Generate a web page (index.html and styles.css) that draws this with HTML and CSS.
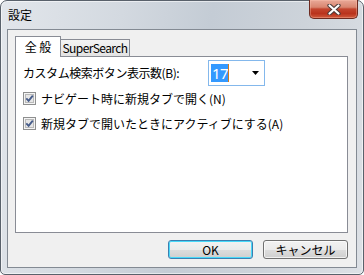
FILE: index.html
```html
<!DOCTYPE html>
<html lang="ja">
<head>
<meta charset="utf-8">
<title>設定</title>
<link rel="stylesheet" href="styles.css">
</head>
<body>
<div class="window">
  <div class="titlebar">
    <span class="title">設定</span>
    <div class="close">
      <svg width="14" height="11" viewBox="0 0 14 11">
        <path d="M2.5 1.5 L11.5 9.5 M11.5 1.5 L2.5 9.5" stroke="#4a3a38" stroke-width="4.2" stroke-linecap="round"/>
        <path d="M2.5 1.5 L11.5 9.5 M11.5 1.5 L2.5 9.5" stroke="#ffffff" stroke-width="2.2" stroke-linecap="round"/>
      </svg>
    </div>
  </div>
  <div class="client">
    <div class="tabs">
      <div class="tab active">全 般</div>
      <div class="tab">SuperSearch</div>
    </div>
    <div class="panel">
      <div class="row">
        <span class="label">カスタム検索ボタン表示数(B):</span>
        <div class="combo">
          <span class="sel">17</span><span class="caret"></span>
          <svg class="arrow" width="7" height="4" viewBox="0 0 7 4"><path d="M0 0 H7 L3.5 4 Z" fill="#000"/></svg>
        </div>
      </div>
      <div class="check">
        <svg class="box" width="13" height="13" viewBox="0 0 13 13">
          <rect x="0.5" y="0.5" width="12" height="12" fill="#f4f4f4" stroke="#8e8f8f"/>
          <rect x="2.5" y="2.5" width="8" height="8" fill="#e6e6e6" stroke="#b9b9b9"/>
          <path d="M3.3 6.4 L5.6 8.8 L9.8 3.6" fill="none" stroke="#465c8a" stroke-width="1.9"/>
        </svg>
        <span>ナビゲート時に新規タブで開く(N)</span>
      </div>
      <div class="check">
        <svg class="box" width="13" height="13" viewBox="0 0 13 13">
          <rect x="0.5" y="0.5" width="12" height="12" fill="#f4f4f4" stroke="#8e8f8f"/>
          <rect x="2.5" y="2.5" width="8" height="8" fill="#e6e6e6" stroke="#b9b9b9"/>
          <path d="M3.3 6.4 L5.6 8.8 L9.8 3.6" fill="none" stroke="#465c8a" stroke-width="1.9"/>
        </svg>
        <span>新規タブで開いたときにアクティブにする(A)</span>
      </div>
    </div>
    <div class="buttons">
      <div class="btn default">OK</div>
      <div class="btn">キャンセル</div>
    </div>
  </div>
</div>
</body>
</html>
```
FILE: styles.css
```css
* { box-sizing: border-box; }
html, body { margin: 0; padding: 0; background: #ffffff; }
body {
  font-family: "Noto Sans CJK JP", "Noto Sans", sans-serif;
  font-size: 12px;
  color: #000;
}
.window {
  width: 364px;
  height: 275px;
  border: 1px solid #59616b;
  border-radius: 7px 7px 5px 5px;
  background: linear-gradient(100deg, #e2e6eb 0%, #d3d9e0 30%, #c4ccd5 52%, #cdd3da 75%, #dde1e6 100%);
  box-shadow: inset 0 0 0 1px rgba(255,255,255,0.55);
  padding: 0 6px 6px 6px;
  display: flex;
  flex-direction: column;
}
.titlebar {
  height: 28px;
  display: flex;
  align-items: flex-start;
}
.title {
  padding-left: 1px;
  margin-top: 6px;
  line-height: 16px;
  font-size: 12px;
}
.close {
  margin-left: auto;
  margin-right: -1px;
  margin-top: -1px;
  width: 49px;
  height: 19px;
  border: 1px solid #6d2a20;
  border-top: 0;
  border-radius: 0 0 5px 5px;
  background: linear-gradient(to bottom, #e9a998 0%, #d98670 40%, #c3452e 50%, #b9331d 75%, #d0593c 100%);
  box-shadow: inset 0 0 0 1px rgba(255,200,180,0.35);
  display: flex;
  align-items: center;
  justify-content: center;
}
.client {
  flex: 1;
  border: 1px solid #838a93;
  background: #f0f0f0;
  display: flex;
  flex-direction: column;
  padding: 6px 8px 0 7px;
}
.tabs {
  display: flex;
  align-items: flex-end;
  height: 20px;
  position: relative;
  z-index: 1;
}
.tab {
  height: 17px;
  padding: 0;
  border: 1px solid #898c95;
  border-bottom: 0;
  border-left: 0;
  background: linear-gradient(to bottom, #f3f3f3, #e3e3e3);
  line-height: 16px;
  font-size: 12px;
  letter-spacing: -0.6px;
  width: 69px;
  text-align: center;
  white-space: nowrap;
}
.tab.active {
  height: 21px;
  margin-bottom: -1px;
  width: 46px;
  background: #fff;
  border-left: 1px solid #898c95;
  line-height: 20px;
  padding-bottom: 2px;
  letter-spacing: 0;
}
.panel {
  width: 333px;
  height: 177px;
  background: #fff;
  border: 1px solid #898c95;
  padding: 3px 0 0 7px;
  display: flex;
  flex-direction: column;
}
.row {
  display: flex;
  align-items: center;
  height: 26px;
}
.label {
  width: 185px;
  line-height: 16px;
  letter-spacing: -0.45px;
}
.combo {
  width: 57px;
  height: 26px;
  border: 1px solid #84b8ec;
  background: #fff;
  display: flex;
  align-items: center;
  padding-left: 2px;
}
.sel {
  background: #3399ff;
  color: #fff;
  font-family: "Noto Sans", "Liberation Sans", sans-serif;
  font-size: 15px;
  line-height: 18px;
  height: 18px;
  padding: 0 0 0 1px;
  letter-spacing: -0.5px;
}
.caret {
  width: 1px;
  height: 18px;
  background: #d27a1c;
}
.arrow {
  margin-left: auto;
  margin-right: 5px;
}
.check {
  display: flex;
  align-items: center;
  height: 17px;
  margin-top: 4px;
  line-height: 16px;
}
.check + .check { margin-top: 8px; }
.box { margin-right: 5px; flex: none; }
.buttons {
  display: flex;
  justify-content: flex-end;
  gap: 10px;
  margin-top: 7px;
}
.btn {
  width: 85px;
  height: 19px;
  border: 1px solid #707070;
  border-radius: 3px;
  background: linear-gradient(to bottom, #f2f2f2 0%, #ebebeb 50%, #dddddd 51%, #cfcfcf 100%);
  box-shadow: inset 0 0 0 1px rgba(255,255,255,0.7);
  text-align: center;
  line-height: 17px;
  font-size: 12px;
}
.btn.default {
  border-color: #3c7fb1;
  box-shadow: inset 0 0 0 1px #48d9f9;
}
```
